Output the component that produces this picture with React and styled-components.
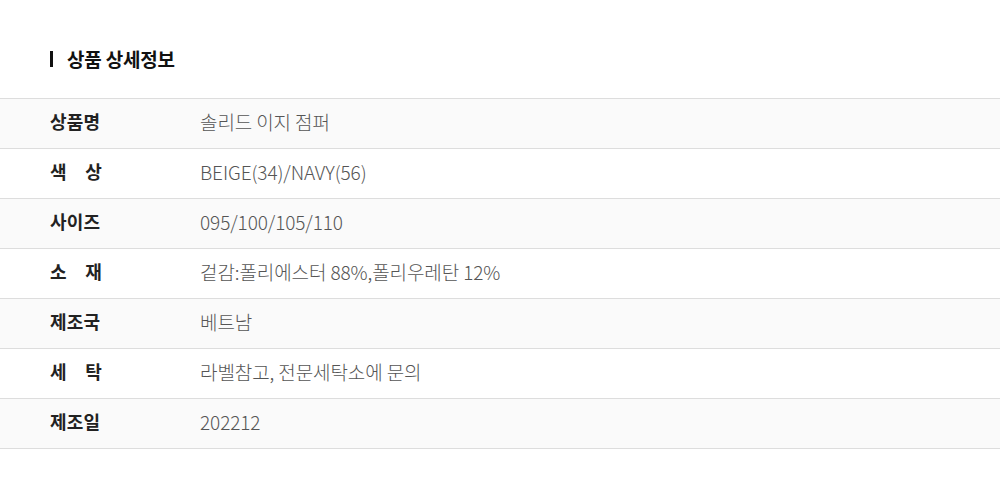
import React from 'react';
import styled, { createGlobalStyle } from 'styled-components';

const GlobalStyle = createGlobalStyle`
  body {
    margin: 0;
    background: #fff;
    font-family: "Noto Sans CJK KR", "Noto Sans", sans-serif;
  }
`;

const Section = styled.section`
  padding: 46px 0 0;
`;

const Heading = styled.h2`
  display: flex;
  align-items: center;
  gap: 14px;
  margin: 0 0 26px;
  padding-left: 50px;
  font-size: 19px;
  font-weight: 700;
  line-height: 26px;
  color: #111;
  letter-spacing: -0.2px;

  &::before {
    content: '';
    width: 3px;
    height: 16px;
    background: #111;
  }
`;

const Table = styled.div`
  border-top: 1px solid #ddd;
`;

const Row = styled.div`
  box-sizing: border-box;
  display: flex;
  align-items: center;
  height: 50px;
  padding: 0 0 5px 50px;
  border-bottom: 1px solid #ddd;
  background: ${(p) => (p.$shaded ? '#fafafa' : '#fff')};
`;

const Label = styled.div`
  width: 52px;
  margin-right: 98px;
  font-size: 18px;
  font-weight: 700;
  color: #222;
  text-align: justify;
  text-align-last: justify;
  white-space: nowrap;
  letter-spacing: 0.2px;
`;

const Value = styled.div`
  font-size: 19px;
  font-weight: 300;
  color: #555;
  letter-spacing: -0.1px;
`;

const specs = [
  ['상품명', '솔리드 이지 점퍼'],
  ['색 상', 'BEIGE(34)/NAVY(56)'],
  ['사이즈', '095/100/105/110'],
  ['소 재', '겉감:폴리에스터 88%,폴리우레탄 12%'],
  ['제조국', '베트남'],
  ['세 탁', '라벨참고, 전문세탁소에 문의'],
  ['제조일', '202212'],
];

export default function App() {
  return (
    <>
      <GlobalStyle />
      <Section>
        <Heading>상품 상세정보</Heading>
        <Table>
          {specs.map(([label, value], i) => (
            <Row key={label} $shaded={i % 2 === 0}>
              <Label>{label}</Label>
              <Value>{value}</Value>
            </Row>
          ))}
        </Table>
      </Section>
    </>
  );
}
